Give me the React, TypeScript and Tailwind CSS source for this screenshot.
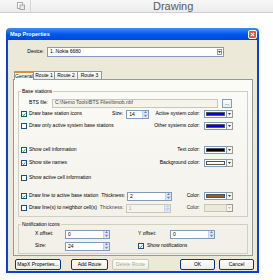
import React from "react";

function Check({ on, dim }: { on?: boolean; dim?: boolean }) {
  return (
    <span
      className={`flex h-[6px] w-[6px] shrink-0 items-center justify-center border ${
        dim ? "border-[#c9c7ba]" : "border-[#1c5180]"
      } bg-white`}
    >
      {on && (
        <svg viewBox="0 0 6 6" className="h-[5px] w-[5px]">
          <path d="M1 3 L2.4 4.6 L5 1.4" stroke="#21a121" strokeWidth="1.4" fill="none" />
        </svg>
      )}
    </span>
  );
}

function Arrows({ dim }: { dim?: boolean }) {
  const c = dim ? "#c9c7ba" : "#4d6185";
  return (
    <span className="flex w-[6px] flex-col border-l border-[#c3d3fd] bg-[#dfe6f7]">
      <span className="flex flex-1 items-center justify-center border-b border-[#c3d3fd]">
        <svg viewBox="0 0 4 2" className="h-[2px] w-[3px]">
          <path d="M0 2 L2 0 L4 2 Z" fill={c} />
        </svg>
      </span>
      <span className="flex flex-1 items-center justify-center">
        <svg viewBox="0 0 4 2" className="h-[2px] w-[3px]">
          <path d="M0 0 L2 2 L4 0 Z" fill={c} />
        </svg>
      </span>
    </span>
  );
}

function Spin({ value, cls, dim }: { value: string; cls: string; dim?: boolean }) {
  return (
    <div
      className={`flex h-[9px] shrink-0 border ${cls} ${
        dim ? "border-[#c9c7ba] bg-[#f5f4ea] text-[#aca899]" : "border-[#7f9db9] bg-white"
      }`}
    >
      <span className="flex-1 pl-[2px] leading-[7px]">{value}</span>
      <Arrows dim={dim} />
    </div>
  );
}

function Swatch({ color, dim }: { color?: string; dim?: boolean }) {
  return (
    <div className="flex h-[8px] shrink-0 items-stretch">
      <span
        className={`flex w-[23px] items-center border px-[1px] ${
          dim ? "border-[#c9c7ba] bg-[#ece9d8]" : "border-[#7f9db9] bg-white"
        }`}
      >
        {color && <span className={`h-[4px] w-full border border-[#555] ${color}`} />}
      </span>
      <span className="flex w-[6px] items-center justify-center border border-l-0 border-[#9a9a8f] bg-[#f4f3ee]">
        <svg viewBox="0 0 4 2" className="h-[2px] w-[3px]">
          <path d="M0 0 L2 2 L4 0 Z" fill={dim ? "#aca899" : "#000"} />
        </svg>
      </span>
    </div>
  );
}

function ColorField({ label, color, dim }: { label: string; color?: string; dim?: boolean }) {
  return (
    <div className="ml-auto flex items-center gap-[4px]">
      <span className={dim ? "text-[#333]" : ""}>{label}</span>
      <Swatch color={color} dim={dim} />
    </div>
  );
}

function Row({ on, text, cls, children }: { on?: boolean; text: string; cls: string; children?: React.ReactNode }) {
  return (
    <div className={`flex h-[10px] items-center pl-[2px] pr-[14px] ${cls}`}>
      <Check on={on} />
      <span className="ml-[2px] whitespace-nowrap">{text}</span>
      {children}
    </div>
  );
}

function Btn({ label, cls, dim }: { label: string; cls: string; dim?: boolean }) {
  return (
    <div
      className={`flex h-[11px] shrink-0 items-center justify-center rounded-[2px] border ${cls} ${
        dim ? "border-[#c9c7ba] text-[#aca899]" : "border-[#003c74] text-black"
      } bg-gradient-to-b from-white to-[#ecebe6]`}
    >
      {label}
    </div>
  );
}

export default function App() {
  return (
    <div className="relative h-[280px] w-[273px] overflow-hidden bg-white font-['Liberation_Sans',sans-serif] text-[5px] text-black">
      {/* Host app toolbar */}
      <div className="flex h-[13px] border-b border-[#cfcfcf] bg-gradient-to-b from-[#f7f7f7] to-[#ececec]">
        <div className="flex w-[31px] items-center justify-end border-r border-[#d6d6d6] pr-[5px]">
          <svg viewBox="0 0 8 8" className="h-[8px] w-[8px]">
            <rect x="0.5" y="0.5" width="5" height="6" fill="#fff" stroke="#a8a8a8" />
            <rect x="3" y="3" width="4.5" height="4.5" fill="#e8e8e8" stroke="#a8a8a8" />
          </svg>
        </div>
        <div className="flex flex-1 items-center pl-[122px] text-[11px] leading-[11px] text-[#5a5a5a]">Drawing</div>
      </div>

      <div className="pl-[6px] pt-[15px]">
        <div className="flex w-[253px] flex-col">
          {/* Title bar */}
          <div className="flex h-[12px] items-center rounded-t-[4px] bg-gradient-to-b from-[#3f8cf3] via-[#0058ee] to-[#0046d5] pl-[4px] pr-[2px]">
            <span className="text-[5.5px] font-bold text-white">Map Properties</span>
            <span className="ml-auto flex h-[9px] w-[9px] items-center justify-center rounded-[2px] border border-white bg-[#e0552e]">
              <svg viewBox="0 0 6 6" className="h-[5px] w-[5px]">
                <path d="M1 1 L5 5 M5 1 L1 5" stroke="#fff" strokeWidth="1.3" />
              </svg>
            </span>
          </div>

          {/* Body */}
          <div className="flex h-[233px] flex-col border-x-2 border-b-2 border-[#0a3fd8] bg-[#ece9d8]">
            {/* Device */}
            <div className="mt-[7px] flex h-[10px] items-center">
              <span className="w-[36px] text-right">Device:</span>
              <div className="ml-[3px] flex h-[10px] w-[177px] items-center border border-[#7f9db9] bg-white pl-[2px] pr-[1px]">
                <span className="flex-1">1. Nokia 6680</span>
                <span className="flex h-[6px] w-[5px] items-center justify-center border border-[#9a9a8f] bg-[#f4f3ee]">
                  <svg viewBox="0 0 4 2" className="h-[2px] w-[3px]">
                    <path d="M0 0 L2 2 L4 0 Z" fill="#000" />
                  </svg>
                </span>
              </div>
            </div>

            {/* Tabs */}
            <div className="relative z-10 ml-[6px] mt-[13px] flex h-[9px] items-end">
              <div className="-mb-px flex h-[9px] w-[20px] items-center justify-center border-x border-t-2 border-[#919b9c] border-t-[#e68b2c] bg-[#fcfcfe]">
                General
              </div>
              <div className="flex h-[8px] w-[21px] items-center justify-center border-r border-t border-[#919b9c] bg-gradient-to-b from-white to-[#ecebe5]">
                Route 1
              </div>
              <div className="flex h-[8px] w-[23px] items-center justify-center border-r border-t border-[#919b9c] bg-gradient-to-b from-white to-[#ecebe5]">
                Route 2
              </div>
              <div className="flex h-[8px] w-[24px] items-center justify-center border-r border-t border-[#919b9c] bg-gradient-to-b from-white to-[#ecebe5]">
                Route 3
              </div>
            </div>

            {/* Tab panel */}
            <div className="ml-[5px] flex h-[177px] w-[240px] flex-col border border-[#919b9c] bg-gradient-to-b from-[#fbfbf8] to-[#f1efe6] px-[4px]">
              {/* Base stations */}
              <div className="relative mt-[11px] flex h-[126px] flex-col border border-[#d0d0bf]">
                <span className="absolute -top-[4px] left-[2px] bg-[#f9f8f4] px-[1px] leading-[6px]">Base stations</span>
                <div className="mt-[6px] flex h-[10px] items-center">
                  <span className="w-[29px] text-right">BTS file:</span>
                  <div className="ml-[4px] flex h-[9px] w-[166px] items-center border border-[#c9c7ba] bg-[#f5f4ea] pl-[2px] text-[#444]">
                    C:\Nemo Tools\BTS Files\bmob.nbf
                  </div>
                  <div className="ml-[4px] flex h-[9px] w-[10px] items-center justify-center border border-[#7f9db9] bg-gradient-to-b from-white to-[#ecebe6] leading-[5px]">
                    ...
                  </div>
                </div>
                <Row on text="Draw base station icons" cls="mt-[1px]">
                  <span className="ml-[30px]">Size:</span>
                  <Spin value="14" cls="ml-[3px] w-[23px]" />
                  <ColorField label="Active system color:" color="bg-[#0000ff]" />
                </Row>
                <Row text="Draw only active system base stations" cls="mt-[2px]">
                  <ColorField label="Other systems color:" color="bg-[#0000ff]" />
                </Row>
                <Row on text="Show cell information" cls="mt-[14px]">
                  <ColorField label="Text color:" color="bg-black" />
                </Row>
                <Row on text="Show site names" cls="mt-[3px]">
                  <ColorField label="Background color:" color="bg-white" />
                </Row>
                <Row text="Show active cell information" cls="mt-[5px]" />
                <Row on text="Draw line to active base station" cls="mt-[8px]">
                  <span className="ml-[3px]">Thickness:</span>
                  <Spin value="2" cls="ml-[2px] w-[45px]" />
                  <ColorField label="Color:" color="bg-[#9a5a2c]" />
                </Row>
                <Row text="Draw line(s) to neighbor cell(s)" cls="mt-[2px]">
                  <span className="ml-[3px] text-[#444]">Thickness:</span>
                  <Spin value="1" cls="ml-[2px] w-[45px]" dim />
                  <ColorField label="Color:" dim />
                </Row>
              </div>

              {/* Notification icons */}
              <div className="relative mt-[7px] flex h-[30px] flex-col border border-[#d0d0bf]">
                <span className="absolute -top-[4px] left-[2px] bg-[#f2f0e8] px-[1px] leading-[6px]">Notification icons</span>
                <div className="mt-[4px] flex h-[10px] items-center pl-[16px]">
                  <span className="w-[30px]">X offset:</span>
                  <Spin value="0" cls="w-[45px]" />
                  <span className="ml-[28px] w-[32px]">Y offset:</span>
                  <Spin value="0" cls="w-[45px]" />
                </div>
                <div className="mt-[2px] flex h-[10px] items-center pl-[16px]">
                  <span className="w-[30px]">Size:</span>
                  <Spin value="24" cls="w-[45px]" />
                  <span className="ml-[28px] flex items-center">
                    <Check on />
                    <span className="ml-[3px]">Show notifications</span>
                  </span>
                </div>
              </div>
            </div>

            {/* Buttons */}
            <div className="mt-[3px] flex items-center pl-[7px] pr-[3px]">
              <Btn label="MapX Properties..." cls="w-[46px]" />
              <Btn label="Add Route" cls="ml-[10px] w-[37px]" />
              <Btn label="Delete Route" cls="ml-[4px] w-[37px]" dim />
              <Btn label="OK" cls="ml-auto w-[35px]" />
              <Btn label="Cancel" cls="ml-[4px] w-[35px]" />
            </div>
          </div>
        </div>
      </div>
    </div>
  );
}
